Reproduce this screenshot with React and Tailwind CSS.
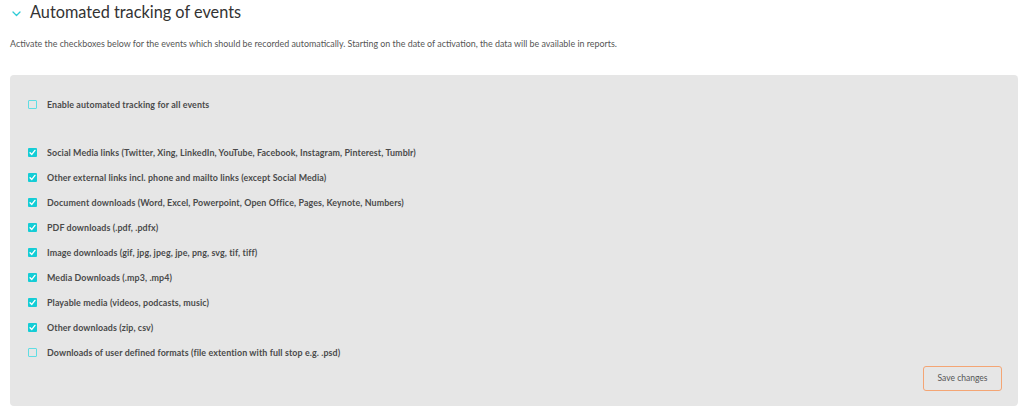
import React, { useState } from 'react';

const EVENTS = [
  { id: 'social', label: 'Social Media links (Twitter, Xing, LinkedIn, YouTube, Facebook, Instagram, Pinterest, Tumblr)', on: true },
  { id: 'external', label: 'Other external links incl. phone and mailto links (except Social Media)', on: true },
  { id: 'docs', label: 'Document downloads (Word, Excel, Powerpoint, Open Office, Pages, Keynote, Numbers)', on: true },
  { id: 'pdf', label: 'PDF downloads (.pdf, .pdfx)', on: true },
  { id: 'images', label: 'Image downloads (gif, jpg, jpeg, jpe, png, svg, tif, tiff)', on: true },
  { id: 'media', label: 'Media Downloads (.mp3, .mp4)', on: true },
  { id: 'playable', label: 'Playable media (videos, podcasts, music)', on: true },
  { id: 'other', label: 'Other downloads (zip, csv)', on: true },
  { id: 'custom', label: 'Downloads of user defined formats (file extention with full stop e.g. .psd)', on: false },
];

const Check = ({ checked, onChange, label }) => (
  <label className="flex items-center h-[25px] cursor-pointer">
    <span
      onClick={onChange}
      className={`w-[9px] h-[9px] rounded-[1px] flex items-center justify-center ${
        checked ? 'bg-[#14cdd6]' : 'border border-[#5fdde3] bg-[#e6e6e6]'
      }`}
    >
      {checked && (
        <svg width="7" height="7" viewBox="0 0 8 8" fill="none">
          <path d="M1.2 4.2 L3.2 6.2 L6.8 1.6" stroke="white" strokeWidth="1.6" strokeLinecap="round" strokeLinejoin="round" />
        </svg>
      )}
    </span>
    <span className="ml-[10px] text-[8.9px] font-bold text-[#4a4a4a] tracking-[0.1px]">{label}</span>
  </label>
);

export default function App() {
  const [all, setAll] = useState(false);
  const [events, setEvents] = useState(EVENTS);

  const toggle = (id) =>
    setEvents(events.map(e => (e.id === id ? { ...e, on: !e.on } : e)));

  return (
    <div className="w-[1024px] h-[414px] bg-white font-['Lato',sans-serif] overflow-hidden">
      {/* Header */}
      <div className="flex items-center pl-[12px] h-[24px]">
        <svg width="9" height="6" viewBox="0 0 9 6" fill="none" className="mt-[4px]">
          <path d="M1 1 L4.5 4.5 L8 1" stroke="#2ecbd6" strokeWidth="1.3" strokeLinecap="round" strokeLinejoin="round" />
        </svg>
        <h1 className="ml-[9px] text-[16.3px] text-[#333] leading-none">Automated tracking of events</h1>
      </div>
      <p className="ml-[10px] mt-[16px] text-[8.9px] text-[#555] leading-none">
        Activate the checkboxes below for the events which should be recorded automatically. Starting on the date of activation, the data will be available in reports.
      </p>

      {/* Panel */}
      <div className="mx-[10px] mt-[26px] w-[1008px] h-[331px] bg-[#e6e6e6] rounded-[4px] pl-[18px] pr-[16px] pt-[17px]">
        <Check checked={all} onChange={() => setAll(!all)} label="Enable automated tracking for all events" />
        <div className="mt-[23px]">
          {events.map(e => (
            <Check key={e.id} checked={e.on} onChange={() => toggle(e.id)} label={e.label} />
          ))}
        </div>
        <div className="flex justify-end mt-[1px]">
          <button className="w-[79px] h-[25px] border border-[#f4a574] rounded-[3px] text-[8.5px] text-[#555] bg-[#e6e6e6]">
            Save changes
          </button>
        </div>
      </div>
    </div>
  );
}
